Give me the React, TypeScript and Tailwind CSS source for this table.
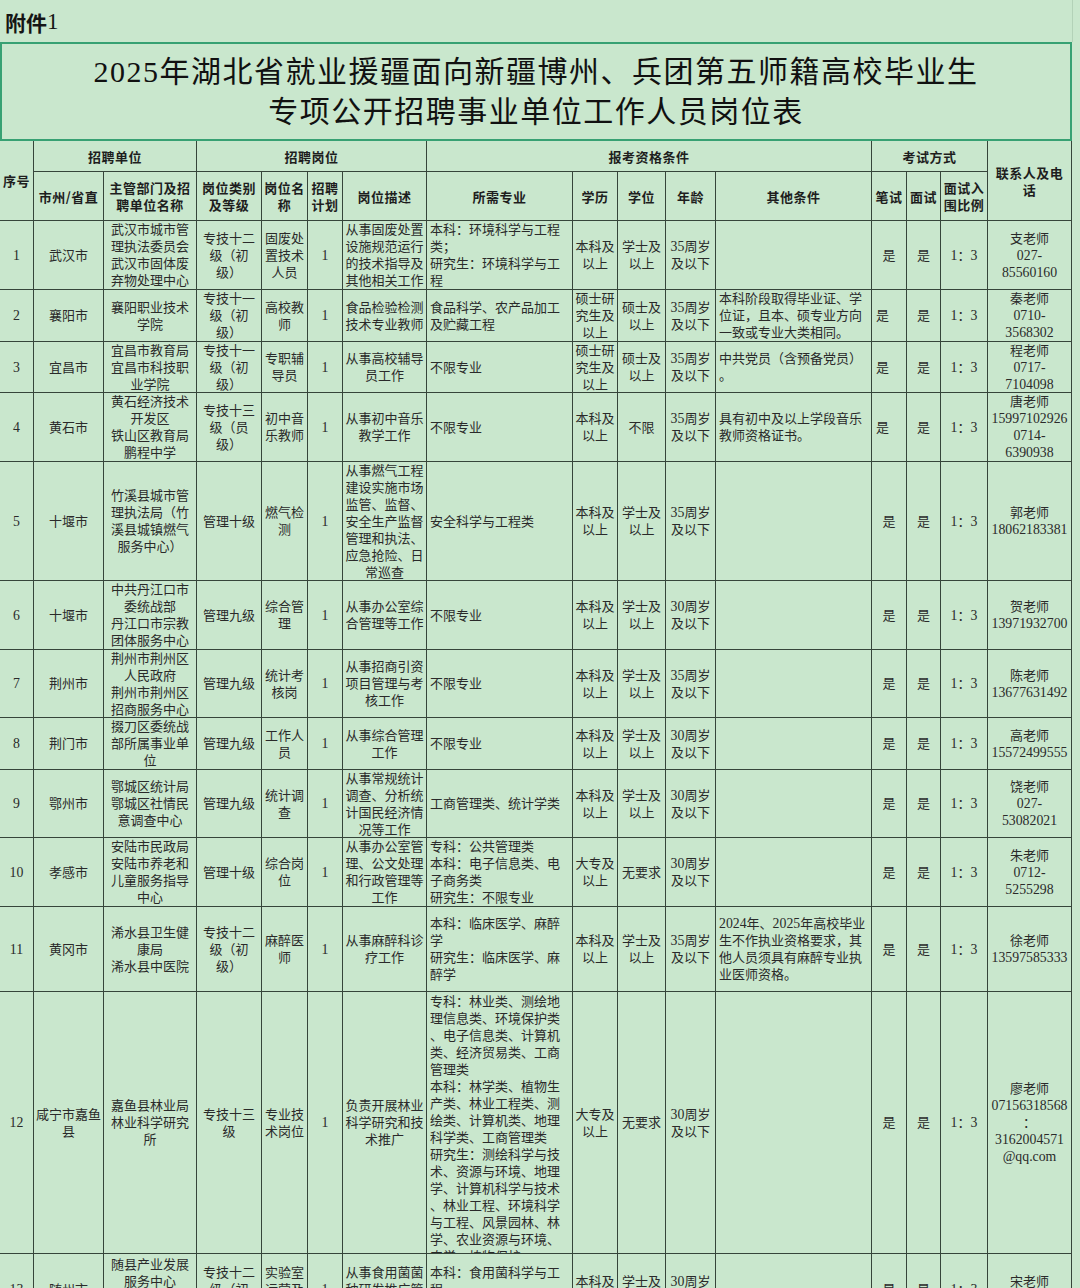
import clsx from "clsx";

// 1080 wide sheet: 16 columns, widths read off the reference
const GRID =
  "grid grid-cols-[34px_70px_93px_65px_46px_35px_84px_146px_45px_48px_50px_156px_35px_34px_47px_84px] grid-rows-[31px_49px_69px_52px_51px_69px_119px_69px_68px_52px_68px_69px_85px_262px_72px]";

const SERIF = "[font-family:'Liberation_Serif','Noto_Sans_CJK_SC',serif]";
const SANS = "[font-family:'Noto_Sans_CJK_SC',sans-serif]";

type Row = { cells: string[]; leftCols?: number[]; topCols?: number[] };

const rows: Row[] = [
  {
    cells: ["1", "武汉市", "武汉市城市管\n理执法委员会\n武汉市固体废\n弃物处理中心", "专技十二\n级（初\n级）", "固废处\n置技术\n人员", "1", "从事固废处置\n设施规范运行\n的技术指导及\n其他相关工作", "本科：环境科学与工程\n类；\n研究生：环境科学与工\n程", "本科及\n以上", "学士及\n以上", "35周岁\n及以下", "", "是", "是", "1：3", "支老师\n027-\n85560160"],
  },
  {
    cells: ["2", "襄阳市", "襄阳职业技术\n学院", "专技十一\n级（初\n级）", "高校教\n师", "1", "食品检验检测\n技术专业教师", "食品科学、农产品加工\n及贮藏工程", "硕士研\n究生及\n以上", "硕士及\n以上", "35周岁\n及以下", "本科阶段取得毕业证、学\n位证，且本、硕专业方向\n一致或专业大类相同。", "是", "是", "1：3", "秦老师\n0710-\n3568302"],
    leftCols: [12],
  },
  {
    cells: ["3", "宜昌市", "宜昌市教育局\n宜昌市科技职\n业学院", "专技十一\n级（初\n级）", "专职辅\n导员", "1", "从事高校辅导\n员工作", "不限专业", "硕士研\n究生及\n以上", "硕士及\n以上", "35周岁\n及以下", "中共党员（含预备党员）\n。", "是", "是", "1：3", "程老师\n0717-\n7104098"],
    leftCols: [12],
  },
  {
    cells: ["4", "黄石市", "黄石经济技术\n开发区\n铁山区教育局\n鹏程中学", "专技十三\n级（员\n级）", "初中音\n乐教师", "1", "从事初中音乐\n教学工作", "不限专业", "本科及\n以上", "不限", "35周岁\n及以下", "具有初中及以上学段音乐\n教师资格证书。", "是", "是", "1：3", "唐老师\n15997102926\n0714-\n6390938"],
    leftCols: [12],
  },
  {
    cells: ["5", "十堰市", "竹溪县城市管\n理执法局（竹\n溪县城镇燃气\n服务中心）", "管理十级", "燃气检\n测", "1", "从事燃气工程\n建设实施市场\n监管、监督、\n安全生产监督\n管理和执法、\n应急抢险、日\n常巡查", "安全科学与工程类", "本科及\n以上", "学士及\n以上", "35周岁\n及以下", "", "是", "是", "1：3", "郭老师\n18062183381"],
  },
  {
    cells: ["6", "十堰市", "中共丹江口市\n委统战部\n丹江口市宗教\n团体服务中心", "管理九级", "综合管\n理", "1", "从事办公室综\n合管理等工作", "不限专业", "本科及\n以上", "学士及\n以上", "30周岁\n及以下", "", "是", "是", "1：3", "贺老师\n13971932700"],
  },
  {
    cells: ["7", "荆州市", "荆州市荆州区\n人民政府\n荆州市荆州区\n招商服务中心", "管理九级", "统计考\n核岗", "1", "从事招商引资\n项目管理与考\n核工作", "不限专业", "本科及\n以上", "学士及\n以上", "35周岁\n及以下", "", "是", "是", "1：3", "陈老师\n13677631492"],
  },
  {
    cells: ["8", "荆门市", "掇刀区委统战\n部所属事业单\n位", "管理九级", "工作人\n员", "1", "从事综合管理\n工作", "不限专业", "本科及\n以上", "学士及\n以上", "30周岁\n及以下", "", "是", "是", "1：3", "高老师\n15572499555"],
  },
  {
    cells: ["9", "鄂州市", "鄂城区统计局\n鄂城区社情民\n意调查中心", "管理九级", "统计调\n查", "1", "从事常规统计\n调查、分析统\n计国民经济情\n况等工作", "工商管理类、统计学类", "本科及\n以上", "学士及\n以上", "30周岁\n及以下", "", "是", "是", "1：3", "饶老师\n027-\n53082021"],
  },
  {
    cells: ["10", "孝感市", "安陆市民政局\n安陆市养老和\n儿童服务指导\n中心", "管理十级", "综合岗\n位", "1", "从事办公室管\n理、公文处理\n和行政管理等\n工作", "专科：公共管理类\n本科：电子信息类、电\n子商务类\n研究生：不限专业", "大专及\n以上", "无要求", "30周岁\n及以下", "", "是", "是", "1：3", "朱老师\n0712-\n5255298"],
  },
  {
    cells: ["11", "黄冈市", "浠水县卫生健\n康局\n浠水县中医院", "专技十二\n级（初\n级）", "麻醉医\n师", "1", "从事麻醉科诊\n疗工作", "本科：临床医学、麻醉\n学\n研究生：临床医学、麻\n醉学", "本科及\n以上", "学士及\n以上", "35周岁\n及以下", "2024年、2025年高校毕业\n生不作执业资格要求，其\n他人员须具有麻醉专业执\n业医师资格。", "是", "是", "1：3", "徐老师\n13597585333"],
  },
  {
    cells: ["12", "咸宁市嘉鱼\n县", "嘉鱼县林业局\n林业科学研究\n所", "专技十三\n级", "专业技\n术岗位", "1", "负责开展林业\n科学研究和技\n术推广", "专科：林业类、测绘地\n理信息类、环境保护类\n、电子信息类、计算机\n类、经济贸易类、工商\n管理类\n本科：林学类、植物生\n产类、林业工程类、测\n绘类、计算机类、地理\n科学类、工商管理类\n研究生：测绘科学与技\n术、资源与环境、地理\n学、计算机科学与技术\n、林业工程、环境科学\n与工程、风景园林、林\n学、农业资源与环境、\n农学、植物保护", "大专及\n以上", "无要求", "30周岁\n及以下", "", "是", "是", "1：3", "廖老师\n07156318568\n：\n3162004571\n@qq.com"],
    topCols: [7],
  },
  {
    cells: ["13", "随州市", "随县产业发展\n服务中心\n随县食用菌产\n业发展中心", "专技十二\n级（初\n级）", "实验室\n运营及\n管理", "1", "从事食用菌菌\n种研发推广管\n理工作", "本科：食用菌科学与工\n程\n研究生：作物学", "本科及\n以上", "学士及\n以上", "30周岁\n及以下", "", "是", "是", "1：3", "宋老师\n0722-4212345"],
  },
];

// Latin runs are set a touch larger, like the Times digits in the sheet
function Line({ text }: { text: string }) {
  return (
    <div className="whitespace-nowrap">
      {text.split(/([\x20-\x7e]+)/).map((part, i) =>
        /[\x20-\x7e]/.test(part) ? (
          <span key={i} className="text-[13.8px]">
            {part}
          </span>
        ) : (
          <span key={i}>{part}</span>
        )
      )}
    </div>
  );
}

function Cell({ text, left, top, narrowLeft }: { text: string; left?: boolean; top?: boolean; narrowLeft?: boolean }) {
  return (
    <div
      className={clsx(
        "flex flex-col overflow-hidden border-r border-b border-[#36453a] leading-[17px]",
        top ? "justify-start pt-[1px]" : "justify-center",
        left ? "items-start text-left pl-[3px]" : narrowLeft ? "items-start pl-[4px]" : "items-center text-center"
      )}
    >
      {text.split("\n").map((line, i) => (
        <Line key={i} text={line} />
      ))}
    </div>
  );
}

function Head({ text, className = "" }: { text: string; className?: string }) {
  return (
    <div
      className={clsx(
        "flex flex-col items-center justify-center border-r border-b border-[#36453a] text-center leading-[17px] tracking-[0.5px]",
        className
      )}
    >
      {text.split("\n").map((line, i) => (
        <div key={i} className="whitespace-nowrap">
          {line}
        </div>
      ))}
    </div>
  );
}

export default function App() {
  return (
    <div className="h-[1288px] w-[1080px] overflow-hidden bg-[#c9e7cd]">
      <div className="w-[1073px]">
        <div className="flex h-[42px] items-center border-r border-[#b3d2b8] pl-[5px] pt-[3px] text-[21px] text-[#151515]">
          <span className={clsx(SANS, "font-semibold")}>附件</span>
          <span className={clsx(SERIF, "text-[23px]")}>1</span>
        </div>

        <div
          className={clsx(
            "flex h-[99px] w-[1072px] flex-col items-center justify-center border-2 border-[#37a173] text-[30px] leading-[40px] tracking-[1.5px] text-[#111]",
            SERIF
          )}
        >
          <div className="whitespace-nowrap">2025年湖北省就业援疆面向新疆博州、兵团第五师籍高校毕业生</div>
          <div className="whitespace-nowrap">专项公开招聘事业单位工作人员岗位表</div>
        </div>

        <div className={GRID}>
          <Head text="序号" className={clsx("row-span-2 text-[13px] font-semibold text-[#1e1e1e]", SANS)} />
          <Head text="招聘单位" className={clsx("col-span-2 text-[13px] font-semibold text-[#1e1e1e]", SANS)} />
          <Head text="招聘岗位" className={clsx("col-span-4 text-[13px] font-semibold text-[#1e1e1e]", SANS)} />
          <Head text="报考资格条件" className={clsx("col-span-5 text-[13px] font-semibold text-[#1e1e1e]", SANS)} />
          <Head text="考试方式" className={clsx("col-span-3 text-[13px] font-semibold text-[#1e1e1e]", SANS)} />
          <Head text={"联系人及电\n话"} className={clsx("row-span-2 text-[13px] font-semibold text-[#1e1e1e]", SANS)} />
          {["市州/省直", "主管部门及招\n聘单位名称", "岗位类别\n及等级", "岗位名\n称", "招聘\n计划", "岗位描述", "所需专业", "学历", "学位", "年龄", "其他条件", "笔试", "面试", "面试入\n围比例"].map((h) => (
            <Head key={h} text={h} className={clsx("text-[13px] font-semibold text-[#1e1e1e]", SANS)} />
          ))}

          {rows.map((row, r) =>
            row.cells.map((c, ci) => (
              <div key={`${r}-${ci}`} className={clsx("contents text-[13px] text-[#2a2a2a]", SERIF)}>
                <Cell
                  text={c}
                  left={ci === 7 || ci === 11}
                  top={row.topCols?.includes(ci)}
                  narrowLeft={row.leftCols?.includes(ci)}
                />
              </div>
            ))
          )}
        </div>
      </div>
    </div>
  );
}
